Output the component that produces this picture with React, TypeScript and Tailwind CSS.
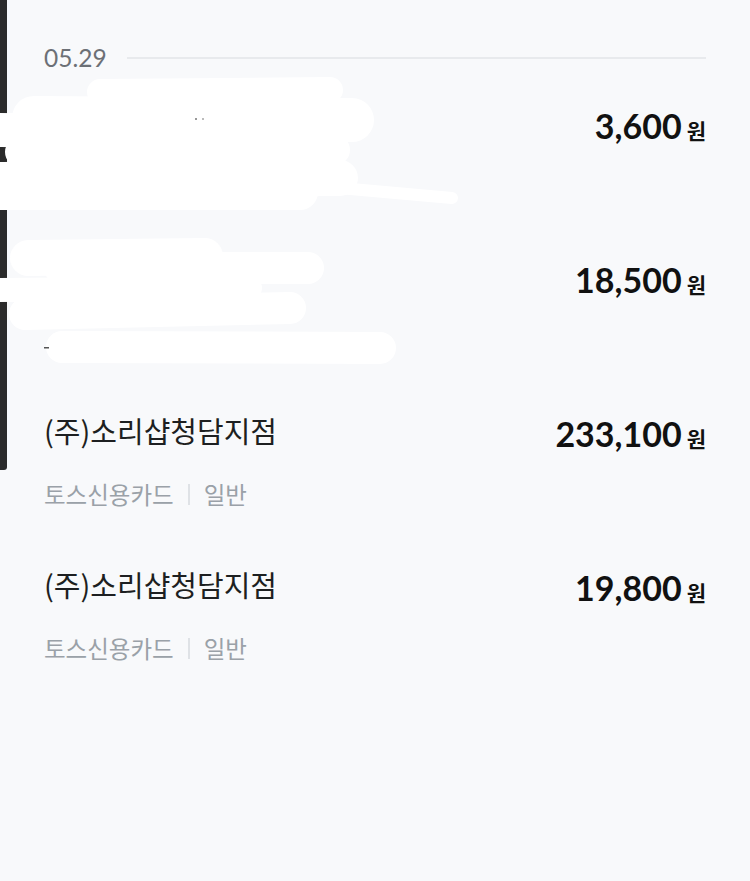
import React from "react";

type Tx = {
    name?: string;
    card?: string;
    kind?: string;
    amount: string;
};

const txs: Tx[] = [
    { amount: "3,600" },
    { amount: "18,500" },
    { name: "(주)소리샵청담지점", card: "토스신용카드", kind: "일반", amount: "233,100" },
    { name: "(주)소리샵청담지점", card: "토스신용카드", kind: "일반", amount: "19,800" },
];

// white marker strokes that hide the first two rows
const strokes = [
    { d: "M100 92 L330 90", w: 26 },
    { d: "M34 118 L352 120", w: 44 },
    { d: "M0 130 L200 132", w: 34 },
    { d: "M60 140 L330 140", w: 20 },
    { d: "M20 152 L335 150", w: 30 },
    { d: "M0 180 L340 178", w: 36 },
    { d: "M0 192 L300 192", w: 36 },
    { d: "M250 180 L452 198", w: 12 },
    { d: "M28 258 L205 256", w: 36 },
    { d: "M60 268 L308 268", w: 32 },
    { d: "M0 290 L250 288", w: 24 },
    { d: "M25 314 L290 308", w: 32 },
    { d: "M62 347 L380 348", w: 32 },
];

function Row({ tx }: { tx: Tx }) {
    return (
        <div className="flex h-[154px] items-start justify-between">
            <div className="flex flex-col">
                <div className="h-[40px] text-[29px] leading-[40px] text-[#1d1f21]">{tx.name}</div>
                {tx.card && (
                    <div className="mt-[29px] flex items-center text-[23.5px] leading-[30px] text-[#9aa1a8]">
                        <span>{tx.card}</span>
                        <span className="mx-[14px] h-[21px] w-[2px] bg-[#dfe2e6]" />
                        <span>{tx.kind}</span>
                    </div>
                )}
            </div>
            <div className="mt-[4px] flex items-baseline font-['Lato','Noto_Sans_CJK_KR',sans-serif] leading-[40px] text-[#111111]">
                <span className="text-[34px] font-bold">{tx.amount}</span>
                <span className="ml-[5px] text-[21px] font-bold">원</span>
            </div>
        </div>
    );
}

export default function App() {
    return (
        <div className="relative flex min-h-[881px] bg-[#f8f9fb] font-['Noto_Sans_CJK_KR',sans-serif]">
            <div className="h-[470px] w-[7px] rounded-br-[3px] bg-[#2b2b2b]" />
            <div className="flex-1 pl-[37px] pr-[44px] pt-[43px]">
                <div className="flex h-[30px] items-center">
                    <span className="font-['Lato',sans-serif] text-[24.5px] leading-[30px] text-[#6c7076]">05.29</span>
                    <div className="ml-[20px] h-[2px] flex-1 bg-[#e8eaed]" />
                </div>
                <div className="mt-[29px]">
                    {txs.map((tx, i) => (
                        <Row key={i} tx={tx} />
                    ))}
                </div>
            </div>

            <svg
                className="pointer-events-none absolute left-0 top-0"
                width={750}
                height={881}
                viewBox="0 0 750 881"
            >
                {strokes.map((s, i) => (
                    <path key={i} d={s.d} stroke="#ffffff" strokeWidth={s.w} strokeLinecap="round" fill="none" />
                ))}
                <rect x={44} y={347} width={5} height={1.5} fill="#555" />
                <rect x={195} y={118} width={2} height={2} fill="#999" />
                <rect x={202} y={118} width={2} height={2} fill="#bbb" />
            </svg>
        </div>
    );
}
